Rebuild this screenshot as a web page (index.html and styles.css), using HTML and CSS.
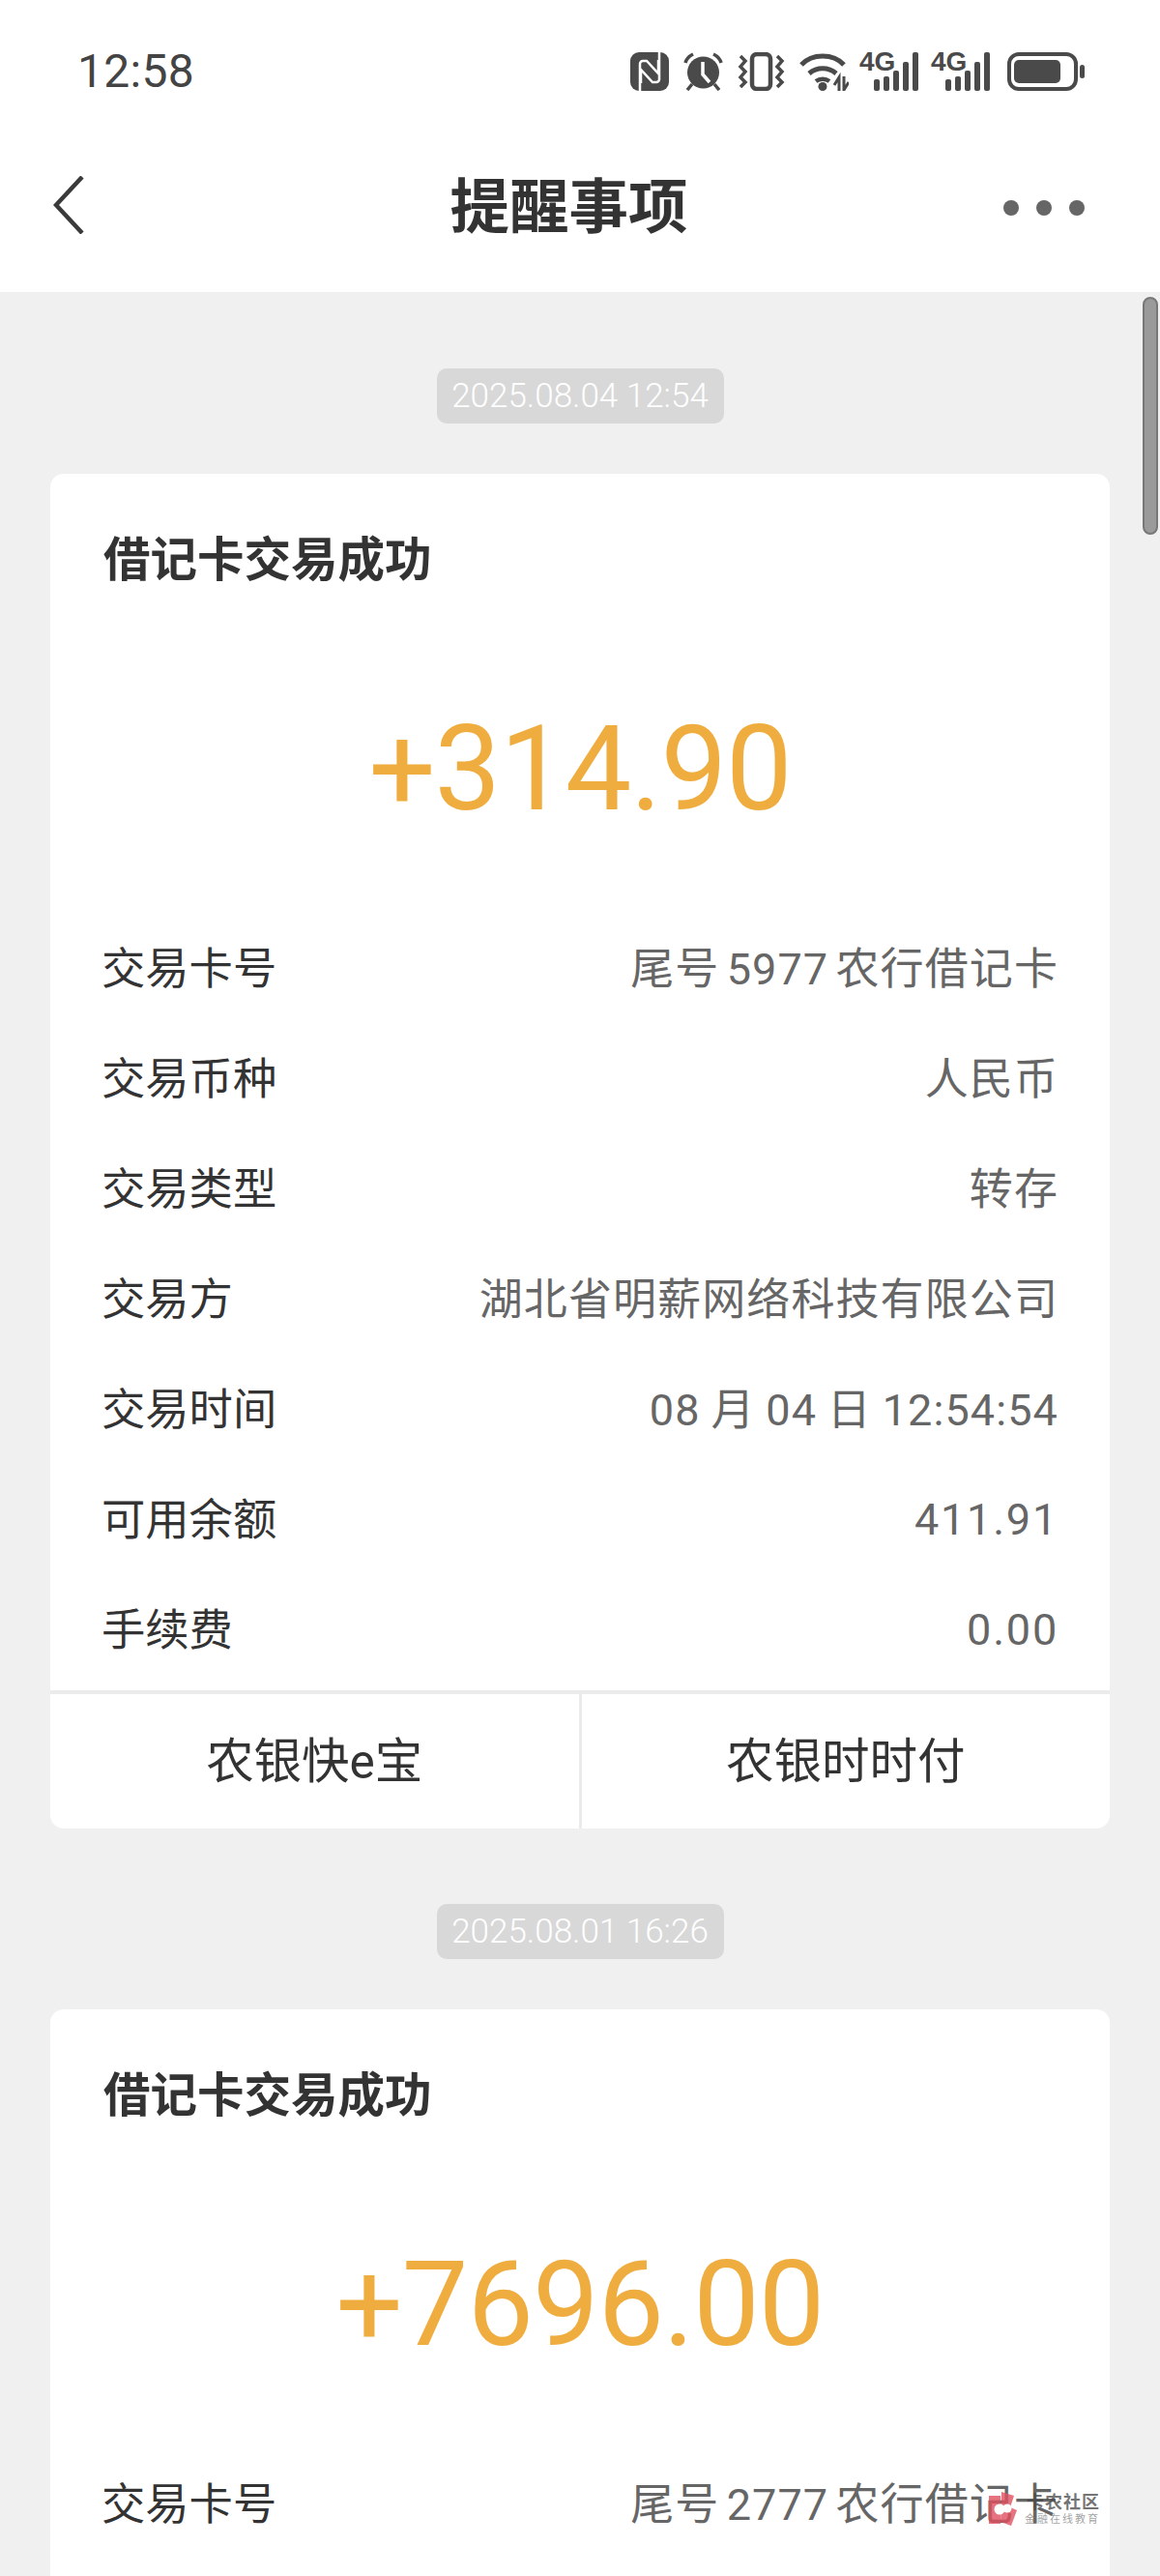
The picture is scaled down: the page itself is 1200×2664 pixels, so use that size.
FILE: index.html
```html
<!DOCTYPE html>
<html lang="zh-CN">
<head>
<meta charset="utf-8">
<title>提醒事项</title>
<link rel="stylesheet" href="styles.css">
</head>
<body>
<div class="phone">
  <header class="top">
    <div class="status">
      <span class="clock">12:58</span>
      <div class="status-icons">
        <svg class="ic" width="40" height="40" viewBox="0 0 40 40"><rect width="40" height="40" rx="9" fill="#4a4a4a"/><path d="M10 40V12a3 3 0 0 1 3-3h4l12 13V8M30 0v28a3 3 0 0 1-3 3h-4L11 18v14" fill="none" stroke="#fff" stroke-width="2.500"/></svg>
        <svg class="ic" width="41" height="40" viewBox="0 0 41 40"><circle cx="20.500" cy="21" r="16.500" fill="#4a4a4a"/><path d="M20 10v13l7 8" fill="none" stroke="#fff" stroke-width="3.500"/><path d="M2 11c1-4 4-7 8-9M39 11c-1-4-4-7-8-9M9 33l-5 6M32 33l5 6" fill="none" stroke="#4a4a4a" stroke-width="3.500"/></svg>
        <svg class="ic" width="49" height="40" viewBox="0 0 49 40"><rect x="15" y="2" width="19" height="36" rx="5" fill="none" stroke="#4a4a4a" stroke-width="4.500"/><path d="M3 4l5 5-5 6 5 5-5 6 5 5-5 5M41 4l5 5-5 6 5 5-5 6 5 5-5 5" fill="none" stroke="#4a4a4a" stroke-width="3.500"/></svg>
        <svg class="ic" width="51" height="40" viewBox="0 0 51 40"><path d="M2 13C13 1 35 1 46 13" fill="none" stroke="#4a4a4a" stroke-width="5"/><path d="M10 22c8-7 20-7 28 0" fill="none" stroke="#4a4a4a" stroke-width="5"/><path d="M17 30c4-3 10-3 14 0" fill="none" stroke="#4a4a4a" stroke-width="4.500"/><circle cx="24" cy="35.500" r="4.500" fill="#4a4a4a"/><path d="M41 40V26l-5 8M46 25v14l5-8" fill="none" stroke="#4a4a4a" stroke-width="3"/></svg>
        <div class="sig"><span class="sig-label">4G</span><svg width="62" height="40" viewBox="0 0 62 40"><g fill="#4a4a4a"><rect x="15" y="28" width="6" height="12" rx="2"/><rect x="25" y="25" width="6" height="15" rx="2"/><rect x="35" y="19" width="6" height="21" rx="2"/><rect x="45" y="10" width="6" height="30" rx="2"/><rect x="55" y="0" width="6" height="40" rx="2"/></g></svg></div>
        <div class="sig"><span class="sig-label">4G</span><svg width="62" height="40" viewBox="0 0 62 40"><g fill="#4a4a4a"><rect x="15" y="28" width="6" height="12" rx="2"/><rect x="25" y="25" width="6" height="15" rx="2"/><rect x="35" y="19" width="6" height="21" rx="2"/><rect x="45" y="10" width="6" height="30" rx="2"/><rect x="55" y="0" width="6" height="40" rx="2"/></g></svg></div>
        <svg class="ic batt" width="80" height="40" viewBox="0 0 80 40"><rect x="2" y="2" width="69" height="36" rx="10" fill="none" stroke="#4a4a4a" stroke-width="4"/><rect x="7" y="8" width="48" height="24" rx="5" fill="#4a4a4a"/><rect x="75" y="13" width="5" height="14" rx="2.500" fill="#4a4a4a"/></svg>
      </div>
    </div>
    <nav class="bar">
      <svg class="back" width="33" height="60" viewBox="0 0 33 60"><path d="M30 1 3 30l27 29" fill="none" stroke="#3a3a3a" stroke-width="4.500"/></svg>
      <h1 class="bar-title">提醒事项</h1>
      <div class="dots"><i></i><i></i><i></i></div>
    </nav>
  </header>

  <main class="list">
    <div class="stamp">2025.08.04 12:54</div>
    <section class="card">
      <h2 class="card-title">借记卡交易成功</h2>
      <div class="amount">+314.90</div>
      <dl class="rows">
        <div class="row"><dt>交易卡号</dt><dd>尾号 5977 农行借记卡</dd></div>
        <div class="row"><dt>交易币种</dt><dd>人民币</dd></div>
        <div class="row"><dt>交易类型</dt><dd>转存</dd></div>
        <div class="row"><dt>交易方</dt><dd>湖北省明薪网络科技有限公司</dd></div>
        <div class="row"><dt>交易时间</dt><dd class="date">08 月 04 日 12:54:54</dd></div>
        <div class="row"><dt>可用余额</dt><dd class="num">411.91</dd></div>
        <div class="row"><dt>手续费</dt><dd class="num">0.00</dd></div>
      </dl>
      <div class="actions">
        <div class="action">农银快e宝</div>
        <div class="action">农银时时付</div>
      </div>
    </section>

    <div class="stamp">2025.08.01 16:26</div>
    <section class="card card-open">
      <h2 class="card-title">借记卡交易成功</h2>
      <div class="amount">+7696.00</div>
      <dl class="rows">
        <div class="row"><dt>交易卡号</dt><dd>尾号 2777 农行借记卡</dd></div>
      </dl>
    </section>
  </main>

  <div class="scrollbar"></div>

  <div class="mark">
    <svg width="31" height="36" viewBox="0 0 31 36"><path d="M1 5h12v29H1zM14 1l13 4-4 12 7 3-6 16-11-4z" fill="#e0505f" opacity=".8"/><circle cx="12" cy="19" r="5.500" fill="#fff"/><circle cx="20" cy="18" r="4.500" fill="#fff"/></svg>
    <div class="mark-text"><span class="mark-name">卡农社区</span><span class="mark-sub">金融在线教育</span></div>
  </div>
</div>
</body>
</html>
```

FILE: styles.css
```css
* { box-sizing: border-box; }
html, body { margin: 0; padding: 0; }
body {
  font-family: Roboto, "Noto Sans CJK SC", sans-serif;
  color: #333;
}
.phone {
  position: relative;
  width: 1200px;
  height: 2664px;
  overflow: hidden;
  display: flex;
  flex-direction: column;
  background: #f0f0f0;
}
.top { background: #fff; height: 302px; flex: none; }
.status {
  height: 147px;
  padding: 0 78px 0 80px;
  display: flex;
  align-items: center;
  justify-content: space-between;
}
.clock { font-size: 48px; font-weight: 400; color: #444; letter-spacing: 0.300px; }
.status-icons { display: flex; align-items: center; gap: 15px; }
.ic { display: block; flex: none; }
.batt { margin-left: 2px; }
.sig { position: relative; width: 62px; height: 40px; margin-left: -3px; }
.ic + .sig { margin-left: -4px; }
.sig svg { display: block; }
.sig-label {
  position: absolute;
  left: 0;
  top: -6px;
  font-family: "Liberation Sans Narrow", "Liberation Sans", sans-serif;
  font-size: 28px;
  font-weight: 700;
  line-height: 32px;
  color: #4a4a4a;
}
.bar {
  height: 133px;
  padding: 0 78px 0 55px;
  display: grid;
  grid-template-columns: 1fr auto 1fr;
  align-items: center;
}
.back { display: block; margin-top: -3px; }
.bar-title {
  margin: 2px 0 0;
  font-size: 61.500px;
  font-weight: 700;
  color: #333;
  line-height: 80px;
}
.dots { display: flex; gap: 18px; margin-top: 2px; justify-self: end; }
.dots i { width: 16px; height: 16px; border-radius: 50%; background: #666; }

.list {
  flex: 1;
  min-height: 0;
  display: flex;
  flex-direction: column;
  align-items: center;
  padding: 79px 52px 0;
}
.stamp {
  width: 297px;
  height: 57px;
  border-radius: 10px;
  background: #d8d8d8;
  color: #fff;
  font-size: 35px;
  font-weight: 300;
  line-height: 57px;
  text-align: center;
  flex: none;
}
.card {
  width: 1096px;
  margin: 52px 0 78px;
  background: #fff;
  border-radius: 14px;
  flex: none;
}
.card-open {
  flex: 1;
  margin-bottom: 0;
  border-radius: 14px 14px 0 0;
}
.card-title {
  margin: 0;
  padding: 56px 55px 0;
  font-size: 48.500px;
  line-height: 68px;
  font-weight: 700;
  color: #333;
}
.amount {
  height: 325px;
  padding-top: 107px;
  text-align: center;
  font-size: 122px;
  font-weight: 400;
  letter-spacing: -1px;
  line-height: 150px;
  color: #f0ad3f;
}
.rows { margin: 0; padding: 0 53px; }
.row {
  height: 114px;
  padding-top: 4px;
  display: flex;
  align-items: center;
  justify-content: space-between;
  font-size: 45.300px;
}
.row dt { color: #333; }
.row dd { margin: 0; color: #666; font-size: 45px; letter-spacing: 1.100px; word-spacing: -5px; }
.row .date { word-spacing: -1.500px; }
.row .num { padding-top: 6px; letter-spacing: 1.800px; }
.actions {
  margin-top: 11px;
  border-top: 4px solid #ebebeb;
  height: 143px;
  display: flex;
}
.action {
  flex: 1;
  display: flex;
  align-items: center;
  justify-content: center;
  padding-bottom: 8px;
  font-size: 49.500px;
  color: #333;
}
.action + .action { border-left: 3px solid #ebebeb; }

.scrollbar {
  position: absolute;
  right: 2px;
  top: 307px;
  width: 16px;
  height: 246px;
  border-radius: 8px;
  background: #9a9a9a;
  border: 2px solid #777;
}
.mark {
  position: absolute;
  left: 1022px;
  top: 2576px;
  display: flex;
  gap: 9px;
  align-items: flex-start;
}
.mark-text { display: flex; flex-direction: column; }
.mark-name { font-size: 18px; line-height: 23px; font-weight: 700; letter-spacing: 1px; color: rgba(70,70,70,.75); }
.mark-sub { font-size: 11px; line-height: 13px; letter-spacing: 2px; color: rgba(120,120,120,.7); margin-left: -2px; }
```
